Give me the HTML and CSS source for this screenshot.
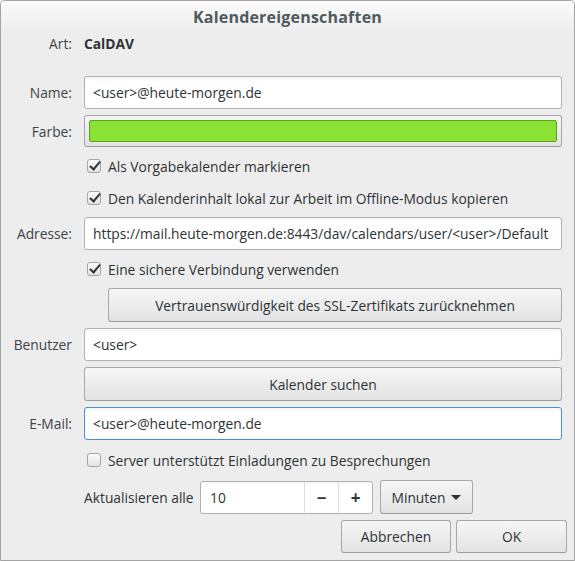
FILE: index.html
```html
<!DOCTYPE html>
<html lang="de">
<head>
  <meta charset="UTF-8" />
  <title>Kalendereigenschaften</title>
  <link rel="stylesheet" href="styles.css">
</head>
<body>
  <div class="window">
    <div class="titlebar">Kalendereigenschaften</div>
    <div class="content">
      <div class="row row-art">
        <span class="label">Art:</span>
        <span class="value">CalDAV</span>
      </div>
      <div class="row">
        <label class="label">Name:</label>
        <input class="entry" type="text" value="<user>@heute-morgen.de">
      </div>
      <div class="row">
        <label class="label">Farbe:</label>
        <button class="button color-button"><span class="swatch"></span></button>
      </div>
      <div class="row check-row">
        <span></span>
        <label class="check"><span class="box checked"></span>Als Vorgabekalender markieren</label>
      </div>
      <div class="row check-row">
        <span></span>
        <label class="check"><span class="box checked"></span>Den Kalenderinhalt lokal zur Arbeit im Offline-Modus kopieren</label>
      </div>
      <div class="row">
        <label class="label">Adresse:</label>
        <input class="entry" type="text" value="https://mail.heute-morgen.de:8443/dav/calendars/user/<user>/Default">
      </div>
      <div class="row check-row">
        <span></span>
        <label class="check"><span class="box checked"></span>Eine sichere Verbindung verwenden</label>
      </div>
      <div class="row">
        <span></span>
        <button class="button ssl-button">Vertrauenswürdigkeit des SSL-Zertifikats zurücknehmen</button>
      </div>
      <div class="row">
        <label class="label">Benutzer</label>
        <input class="entry" type="text" value="<user>">
      </div>
      <div class="row">
        <span></span>
        <button class="button tall">Kalender suchen</button>
      </div>
      <div class="row">
        <label class="label">E-Mail:</label>
        <input class="entry focused" type="text" value="<user>@heute-morgen.de">
      </div>
      <div class="row check-row last-check">
        <span></span>
        <label class="check"><span class="box"></span>Server unterstützt Einladungen zu Besprechungen</label>
      </div>
      <div class="row">
        <span></span>
        <div class="refresh">
          <span class="refresh-label">Aktualisieren alle</span>
          <div class="spin">
            <span class="spin-value">10</span>
            <span class="spin-btn">&minus;</span>
            <span class="spin-btn">+</span>
          </div>
          <button class="button combo">Minuten <span class="arrow"></span></button>
        </div>
      </div>
      <div class="actions">
        <button class="button action">Abbrechen</button>
        <button class="button action">OK</button>
      </div>
    </div>
  </div>
</body>
</html>
```

FILE: styles.css
```css
body {
  margin: 0;
  background: #ededed;
  font-family: 'Open Sans', sans-serif;
  font-size: 13.8px;
  color: #2e3436;
}
.window {
  width: 573px;
  height: 559px;
  border: 1px solid #a3a3a3;
  border-radius: 5px 5px 0 0;
  background: #ededed;
  overflow: hidden;
}
.titlebar {
  height: 33px;
  line-height: 33px;
  text-align: center;
  font-weight: bold;
  font-size: 16px;
  letter-spacing: 0.2px;
  color: #4f5a60;
  background: linear-gradient(#fafafa, #ededed);
}
.content {
  display: flex;
  flex-direction: column;
  gap: 6px;
  padding: 0 12px 0 0;
}
.row {
  display: grid;
  grid-template-columns: 71px 1fr;
  column-gap: 12px;
  align-items: center;
}
.row-art {
  height: 36px;
  align-items: start;
}
.row-art .label, .row-art .value {
  line-height: 20px;
}
.label {
  text-align: right;
  color: #3d4346;
}
.value {
  font-weight: bold;
}
.entry {
  height: 33px;
  box-sizing: border-box;
  border: 1px solid #b0b0ae;
  border-radius: 3px;
  background: linear-gradient(#f6f6f6, #ffffff 5px);
  padding: 0 8px;
  font: inherit;
  color: #2e3436;
  outline: none;
}
.entry.focused {
  border-color: #4a90d9;
}
.button {
  height: 33px;
  box-sizing: border-box;
  border: 1px solid #a8a8a8;
  border-bottom-color: #9a9a9a;
  border-radius: 3px;
  background: linear-gradient(#f6f6f6, #e3e3e3);
  font: inherit;
  color: #2e3436;
  padding: 0 10px;
}
.button.tall {
  height: 34px;
}
.color-button {
  height: 32px;
  padding: 4px;
  display: flex;
}
.swatch {
  flex: 1;
  background: #8ae234;
  border: 1px solid #5f9e24;
  border-radius: 2px;
}
.ssl-button {
  height: 34px;
  margin-left: 24px;
}
.check-row {
  height: 26px;
}
.last-check {
  height: 28px;
}
.check {
  display: flex;
  align-items: center;
  gap: 7px;
  margin-left: 3px;
}
.box {
  width: 14px;
  height: 14px;
  box-sizing: border-box;
  border: 1px solid #a4a4a4;
  border-radius: 3px;
  background: linear-gradient(#fbfbfb, #e4e4e4);
  position: relative;
}
.box.checked::after {
  content: "";
  position: absolute;
  left: 4px;
  top: -1px;
  width: 4px;
  height: 9px;
  border: solid #2e3436;
  border-width: 0 2.5px 2.5px 0;
  transform: rotate(40deg);
}
.refresh {
  display: flex;
  align-items: center;
}
.refresh-label {
  width: 116px;
}
.spin {
  display: flex;
  width: 173px;
  height: 33px;
  box-sizing: border-box;
  border: 1px solid #b0b0ae;
  border-radius: 3px;
  background: linear-gradient(#f6f6f6, #ffffff 5px);
}
.spin-value {
  flex: 1;
  line-height: 31px;
  padding-left: 9px;
}
.spin-btn {
  width: 33px;
  border-left: 1px solid #dedede;
  text-align: center;
  line-height: 31px;
  font-weight: bold;
  font-size: 17px;
}
.combo {
  margin-left: 7px;
  width: 93px;
  height: 34px;
  display: flex;
  align-items: center;
  justify-content: center;
  gap: 6px;
}
.arrow {
  width: 0;
  height: 0;
  border-left: 5px solid transparent;
  border-right: 5px solid transparent;
  border-top: 5px solid #2e3436;
}
.actions {
  display: flex;
  justify-content: flex-end;
  gap: 5px;
  margin-right: -5px;
}
.action {
  width: 110px;
}
.action + .action {
  width: 111px;
}
```
